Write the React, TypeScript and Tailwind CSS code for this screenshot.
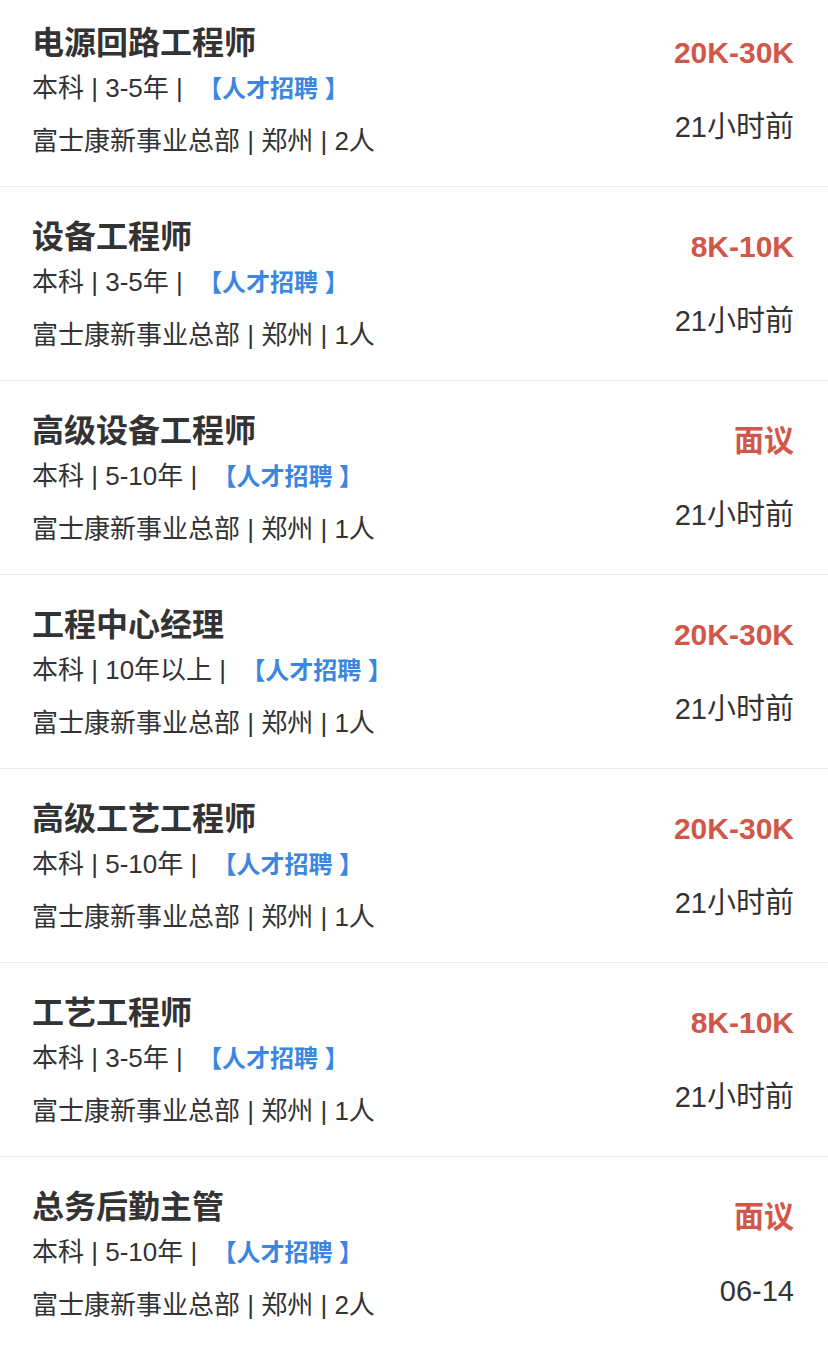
import React from "react";

type Job = {
  title: string;
  exp: string;
  count: string;
  salary: string;
  time: string;
};

const jobs: Job[] = [
  { title: "电源回路工程师", exp: "3-5年", count: "2人", salary: "20K-30K", time: "21小时前" },
  { title: "设备工程师", exp: "3-5年", count: "1人", salary: "8K-10K", time: "21小时前" },
  { title: "高级设备工程师", exp: "5-10年", count: "1人", salary: "面议", time: "21小时前" },
  { title: "工程中心经理", exp: "10年以上", count: "1人", salary: "20K-30K", time: "21小时前" },
  { title: "高级工艺工程师", exp: "5-10年", count: "1人", salary: "20K-30K", time: "21小时前" },
  { title: "工艺工程师", exp: "3-5年", count: "1人", salary: "8K-10K", time: "21小时前" },
  { title: "总务后勤主管", exp: "5-10年", count: "2人", salary: "面议", time: "06-14" },
];

const font = {
  fontFamily: '"Liberation Sans", "Noto Sans CJK SC", sans-serif',
};

function JobItem({ job, first }: { job: Job; first: boolean }) {
  return (
    <div
      className={
        first
          ? "flex justify-between border-b border-[#ebebeb] pl-[32px] pr-[34px] pt-[21px] pb-[25px]"
          : "flex justify-between border-b border-[#ebebeb] pl-[32px] pr-[34px] pt-[28px] pb-[25px]"
      }
    >
      <div className="flex flex-col">
        <div className="mt-[2px] h-[40px] leading-[40px] text-[32px] font-bold text-[#333333] whitespace-nowrap">
          {job.title}
        </div>
        <div className="mt-[5px] h-[40px] leading-[40px] text-[26px] text-[#333333] whitespace-pre">
          {"本科 | " + job.exp + " | "}
          <span className="ml-[8px] text-[24px] font-bold text-[#3a86e0]">{"【人才招聘 】"}</span>
        </div>
        <div className="mt-[13px] h-[40px] leading-[40px] text-[26px] text-[#333333] whitespace-pre">
          {"富士康新事业总部 | 郑州 | " + job.count}
        </div>
      </div>
      <div className="flex flex-col items-end">
        <div className="mt-[12px] h-[40px] leading-[40px] text-[30px] font-bold text-[#d0574a] whitespace-nowrap">
          {job.salary}
        </div>
        <div className="mt-[34px] h-[40px] leading-[40px] text-[29px] text-[#333333] whitespace-nowrap">
          {job.time}
        </div>
      </div>
    </div>
  );
}

export default function App() {
  return (
    <div className="w-[828px] h-[1347px] bg-white overflow-hidden" style={font}>
      {jobs.map((job, i) => (
        <JobItem key={i} job={job} first={i === 0} />
      ))}
    </div>
  );
}
